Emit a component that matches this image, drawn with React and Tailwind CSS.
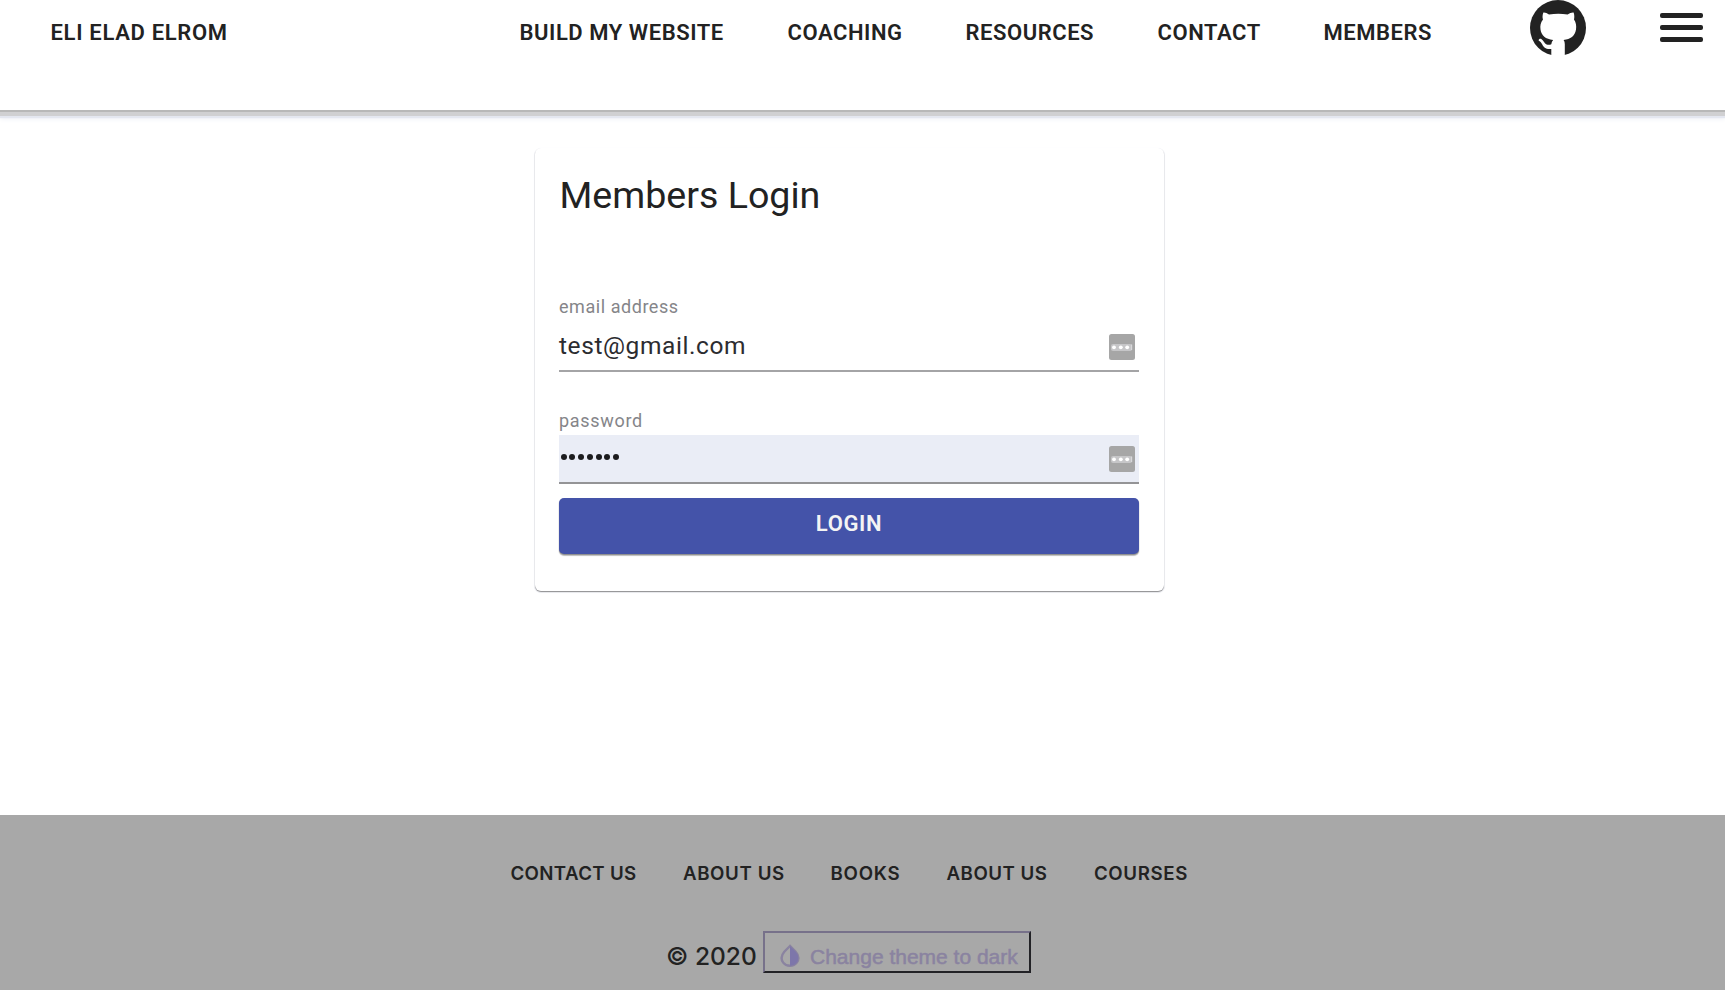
import React from "react";

const navItems = [
  { label: "BUILD MY WEBSITE", cls: "w-[268px]" },
  { label: "COACHING", cls: "w-[178px]" },
  { label: "RESOURCES", cls: "w-[192px]" },
  { label: "CONTACT", cls: "w-[166px]" },
  { label: "MEMBERS", cls: "w-[205px]" },
];

const footerItems = [
  { label: "CONTACT US", cls: "w-[172.5px] tracking-[0.35px]" },
  { label: "ABOUT US", cls: "w-[147.5px] tracking-[0.6px]" },
  { label: "BOOKS", cls: "w-[116px] tracking-[0.75px]" },
  { label: "ABOUT US", cls: "w-[147.5px] tracking-[0.5px]" },
  { label: "COURSES", cls: "w-[96px] tracking-[0.6px]" },
];

function GithubMark() {
  return (
    <svg viewBox="0 0 56 56" className="block h-[56px] w-[56px]">
      <circle cx="28" cy="28" r="28" fill="#222" />
      <path
        d="M13.4 12.5 C15 12.2 17 13.2 19 14.6 Q28.3 12.8 37.6 14.6 C39.6 13.2 42 12.2 43.6 12.5 C44.5 15 44.5 17.5 44 19.6 C46 22.5 46.6 26 46 29.5 C45 36 40.5 39.2 33.6 40 Q34.8 41.5 34.8 44 V56 H21.3 V49 C16 49.6 13.6 47.6 12.3 44.6 C11.3 42.4 10 41.2 8.6 40.4 C8.6 39 10.4 38.4 11.6 39.2 C13.6 40.6 14.4 43.4 16.6 44.4 C18.2 45 20 44.8 21.3 44.2 Q21.6 41.4 23.2 40 C15.5 39.2 11.4 35.5 10.5 29.5 C10 26 10.6 22.6 13 19.6 C12.3 17.5 12.4 15 13.4 12.5 Z"
        fill="#fff"
      />
    </svg>
  );
}

function PasswordManagerIcon() {
  return (
    <svg viewBox="0 0 26 26" className="mr-[4px] block h-[26px] w-[26px] shrink-0">
      <rect width="26" height="26" rx="2.5" fill="#a6a6a6" />
      <rect x="2" y="10" width="21" height="7" rx="2" fill="#c6c6c8" />
      <circle cx="5" cy="13.3" r="1.9" fill="#fff" />
      <circle cx="11.8" cy="13.3" r="1.9" fill="#fff" />
      <circle cx="18.2" cy="13.3" r="1.9" fill="#fff" />
      <rect x="22" y="10.5" width="1.2" height="5.5" fill="#d8d8da" />
    </svg>
  );
}

export default function App() {
  return (
    <div className="flex h-[990px] w-[1725px] flex-col overflow-hidden bg-white font-['Roboto',sans-serif] text-[#222]">
      <header className="flex h-[110px] shrink-0 items-start bg-white pl-[50.5px] text-[22px] font-semibold tracking-[0.55px] shadow-[0_2px_0_0_#b8b8b8,0_6px_0_0_#d0d0d2,0_8px_1px_0_#e4e7f0,0_9px_5px_0_#eef0f6]">
        <div className="w-[469px] shrink-0 whitespace-nowrap pt-[19px] leading-7 tracking-[0.68px]">ELI ELAD ELROM</div>
        <nav className="flex shrink-0 pt-[19px] leading-7">
          {navItems.map((item) => (
            <a key={item.label} className={"shrink-0 whitespace-nowrap " + item.cls}>{item.label}</a>
          ))}
        </nav>
        <div className="ml-[1.5px] shrink-0"><GithubMark /></div>
        <div className="ml-[74px] mt-[13px] flex w-[43px] shrink-0 flex-col gap-[7px]">
          <div className="h-[5px] rounded-[2px] bg-[#222]" />
          <div className="h-[5px] rounded-[2px] bg-[#222]" />
          <div className="h-[5px] rounded-[2px] bg-[#222]" />
        </div>
      </header>

      <main className="flex flex-1 flex-col pl-[535px] pt-[38px]">
        <section className="flex h-[443px] w-[629px] flex-col rounded-[6px] bg-white pl-[24px] pr-[25px] shadow-[0_1px_1px_0_#8e8e90,0_1px_1px_1px_#f1f2f7]">
          <h1 className="mt-[24px] h-[46px] pl-[0.5px] text-[37.6px] leading-[46px]">Members Login</h1>
          <label className="mt-[77px] h-[24px] text-[18px] leading-6 tracking-[0.55px] text-[#858589]">email address</label>
          <div className="mt-[4px] flex h-[49px] items-center justify-between border-b-2 border-[#a4a4a6]">
            <span className="pb-[2px] text-[24.5px] leading-8 tracking-[0.58px] text-[#2c2c30]">test@gmail.com</span>
            <PasswordManagerIcon />
          </div>
          <label className="mt-[37px] h-[24px] text-[18px] leading-6 tracking-[0.7px] text-[#858589]">password</label>
          <div className="mt-[2px] flex h-[49px] items-center justify-between border-b-2 border-[#949496] bg-[#eaedf6]">
            <div className="flex gap-[2.8px] pb-[4px] pl-[1.5px]">
              {[0, 1, 2, 3, 4, 5, 6].map((n) => (
                <span key={n} className="h-[6px] w-[6px] rounded-full bg-[#1c1c1e]" />
              ))}
            </div>
            <PasswordManagerIcon />
          </div>
          <button className="mt-[14px] h-[56px] rounded-[5px] bg-[#4453a9] pb-[5px] text-[22px] font-semibold tracking-[0.6px] text-[#f4f4f4] shadow-[0_1px_1px_0_#8c8c8c,0_2px_1px_0_#c4c4c4]">LOGIN</button>
        </section>
      </main>

      <footer className="flex h-[175px] shrink-0 flex-col bg-[#a8a8a8]">
        <nav className="ml-[510.5px] mt-[45px] flex h-[28px] text-[18.7px] font-semibold leading-7 font-['Inter',sans-serif]">
          {footerItems.map((item, i) => (
            <a key={i} className={"shrink-0 whitespace-nowrap " + item.cls}>{item.label}</a>
          ))}
        </nav>
        <div className="ml-[666px] mt-[43px] flex items-start">
          <span className="mt-[9px] w-[97px] whitespace-nowrap text-[24.5px] font-medium leading-8 font-['Inter',sans-serif]">© 2020</span>
          <button className="flex h-[42px] w-[268px] items-center border-2 border-b-[#222226] border-l-[#77718a] border-r-[#222226] border-t-[#77718a] pl-[15px] pt-[7px] text-[#8a83a0]">
            <svg viewBox="0 0 20 24" className="block h-[24px] w-[20px] shrink-0">
              <path d="M10 2 L4.5 7.5 C1.2 11.2 1 15.5 3.2 18.6 C6.3 22.8 13.7 22.8 16.8 18.6 C19 15.5 18.8 11.2 15.5 7.5 Z" fill="none" stroke="#8a83a0" strokeWidth="2.4" />
              <path d="M10 2 L15.5 7.5 C18.8 11.2 19 15.5 16.8 18.6 C15 21 12.5 21.8 10 21.8 Z" fill="#7d76aa" />
            </svg>
            <span className="ml-[10px] whitespace-nowrap pt-[3px] text-[21px] leading-6 [-webkit-text-stroke:0.5px_#8a83a0] font-['Liberation_Sans',sans-serif]">Change theme to dark</span>
          </button>
        </div>
      </footer>
    </div>
  );
}
